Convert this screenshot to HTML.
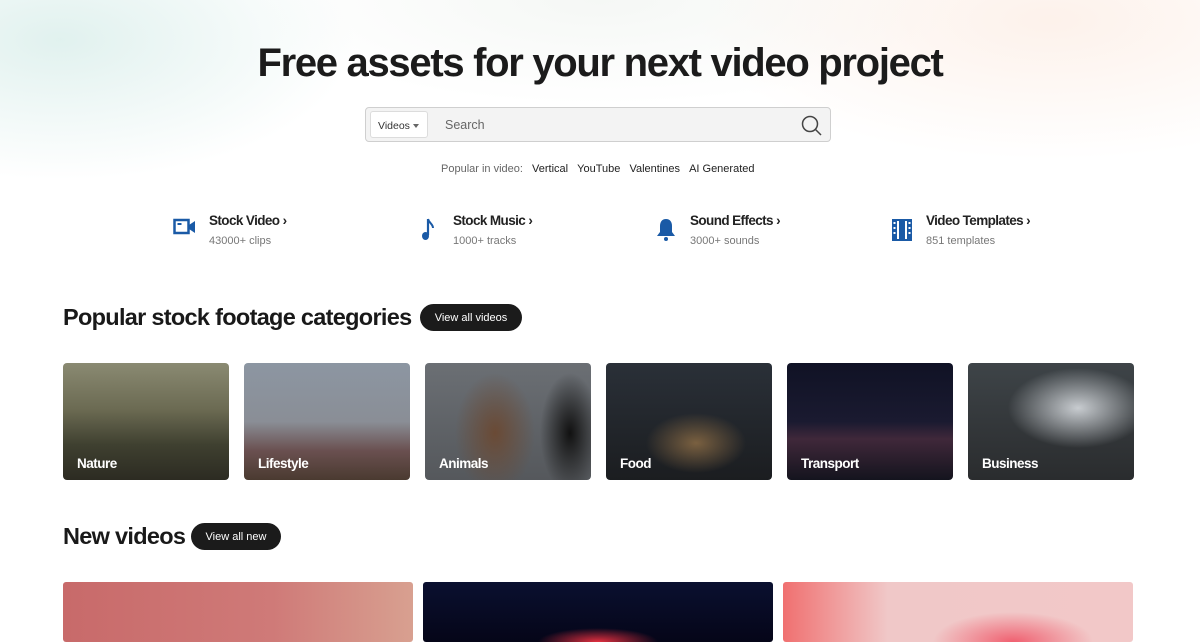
<!DOCTYPE html>
<html><head><meta charset="utf-8"><style>
*{margin:0;padding:0;box-sizing:border-box}
body{width:1200px;height:628px;overflow:hidden;font-family:"Liberation Sans",sans-serif;color:#191919;position:relative;background:#fff}
.bg{position:absolute;inset:0;height:260px;background:radial-gradient(ellipse 420px 200px at 60px 40px,rgba(200,230,225,.55),transparent 70%),radial-gradient(ellipse 500px 200px at 1050px 20px,rgba(250,225,210,.45),transparent 70%),radial-gradient(ellipse 500px 150px at 600px 0,rgba(235,240,235,.5),transparent 70%)}
h1{position:absolute;top:41px;left:0;width:1200px;text-align:center;font-size:40px;font-weight:700;letter-spacing:-1.3px;color:#1b1b1b}
.search{position:absolute;left:365px;top:107px;width:466px;height:35px;background:#f3f3f3;border:1px solid #cfcfcf;border-radius:4px}
.sel{position:absolute;left:4px;top:3px;width:58px;height:27px;background:#fff;border:1px solid #dcdcdc;border-radius:3px;font-size:10.5px;color:#333;padding:8px 0 0 7px}
.sel:after{content:"";position:absolute;right:8px;top:12px;border:3px solid transparent;border-top:4px solid #666}
.ph{position:absolute;left:79px;top:10px;font-size:12.5px;color:#666}
.pop{position:absolute;top:163px;left:441px;font-size:11px;color:#666}
.pop b{font-weight:400;color:#222;margin-left:6px}
.cat{position:absolute;top:213px}
.cat .t{position:absolute;left:36px;top:0;font-size:13.5px;font-weight:700;white-space:nowrap;letter-spacing:-.6px;color:#222}
.cat .s{position:absolute;left:36px;top:22px;font-size:11px;color:#777;white-space:nowrap}
.cat svg{position:absolute;left:0;top:4px}
h2{position:absolute;font-size:23.5px;font-weight:700;letter-spacing:-.7px}
.btn{position:absolute;background:#1b1b1b;color:#fff;font-size:11px;border-radius:14px;height:27px;display:flex;align-items:center;justify-content:center;padding-top:1px}
.card{position:absolute;top:363px;width:166px;height:117px;border-radius:4px;overflow:hidden}
.card span{position:absolute;left:14px;bottom:9px;color:#fff;font-weight:700;font-size:13.5px;letter-spacing:-.5px}
.nv{position:absolute;top:582px;width:350px;height:60px;border-radius:3px}
</style></head><body>
<div class="bg"></div>
<h1>Free assets for your next video project</h1>
<div class="search"><div class="sel">Videos</div><div class="ph">Search</div>
<svg style="position:absolute;left:435px;top:7px" width="22" height="22" viewBox="0 0 22 22"><circle cx="9" cy="9" r="7.5" fill="none" stroke="#444" stroke-width="1.5"/><line x1="14.5" y1="14.5" x2="20" y2="20" stroke="#444" stroke-width="1.5"/></svg></div>
<div class="pop">Popular in video: <b>Vertical</b> <b>YouTube</b> <b>Valentines</b> <b>AI Generated</b></div>

<div class="cat" style="left:173px"><svg width="24" height="20" viewBox="0 0 24 20"><rect x="1.5" y="3" width="14" height="13" fill="none" stroke="#1a5aa6" stroke-width="2.5"/><rect x="4.5" y="6" width="4" height="2" fill="#1a5aa6"/><path d="M16 8l6-4v12l-6-4z" fill="#1a5aa6"/></svg><div class="t">Stock Video ›</div><div class="s">43000+ clips</div></div>
<div class="cat" style="left:417px"><svg width="24" height="26" viewBox="0 0 24 26"><path d="M11 2v16" stroke="#1a5aa6" stroke-width="2.2"/><ellipse cx="8.5" cy="19" rx="3.5" ry="4" fill="#1a5aa6"/><path d="M11 2c1 4 5 5 5 9" stroke="#1a5aa6" stroke-width="2" fill="none"/></svg><div class="t">Stock Music ›</div><div class="s">1000+ tracks</div></div>
<div class="cat" style="left:654px"><svg width="24" height="26" viewBox="0 0 24 26"><path d="M12 2c4 0 6 3 6 7v6l3 4H3l3-4V9c0-4 2-7 6-7z" fill="#1a5aa6"/><circle cx="12" cy="22" r="2" fill="#1a5aa6"/></svg><div class="t">Sound Effects ›</div><div class="s">3000+ sounds</div></div>
<div class="cat" style="left:890px"><svg width="24" height="26" viewBox="0 0 24 26"><rect x="2" y="2" width="20" height="22" fill="#1a5aa6"/><rect x="7" y="4" width="10" height="18" fill="#fff"/><rect x="9" y="4" width="6" height="18" fill="#1a5aa6"/><g fill="#fff"><rect x="3.5" y="5" width="2" height="2"/><rect x="3.5" y="10" width="2" height="2"/><rect x="3.5" y="15" width="2" height="2"/><rect x="18.5" y="5" width="2" height="2"/><rect x="18.5" y="10" width="2" height="2"/><rect x="18.5" y="15" width="2" height="2"/></g></svg><div class="t">Video Templates ›</div><div class="s">851 templates</div></div>

<h2 style="left:63px;top:304px">Popular stock footage categories</h2>
<div class="btn" style="left:420px;top:304px;width:102px">View all videos</div>

<div class="card" style="left:63px;background:linear-gradient(180deg,#8a8a72 0%,#6b6a52 40%,#3f4030 70%,#2c2b22 100%)"><span>Nature</span></div>
<div class="card" style="left:244px;background:linear-gradient(180deg,#8c96a2 0%,#8a8e96 50%,#6a5050 75%,#4a3a30 100%)"><span>Lifestyle</span></div>
<div class="card" style="left:425px;background:radial-gradient(ellipse 40px 60px at 70px 70px,#6a4a35,transparent),radial-gradient(ellipse 30px 60px at 145px 70px,#111,transparent),linear-gradient(#6b6f74,#55585c)"><span>Animals</span></div>
<div class="card" style="left:606px;background:radial-gradient(ellipse 50px 30px at 90px 80px,#7a6040,transparent),linear-gradient(#2a3038,#1b1d20)"><span>Food</span></div>
<div class="card" style="left:787px;background:linear-gradient(180deg,#101225 0%,#1a1a30 50%,#40283a 65%,#14141e 100%)"><span>Transport</span></div>
<div class="card" style="left:968px;background:radial-gradient(ellipse 70px 40px at 110px 45px,#c8ccd0,transparent),linear-gradient(#3e4448,#2a2c2e)"><span>Business</span></div>

<h2 style="left:63px;top:523px">New videos</h2>
<div class="btn" style="left:191px;top:523px;width:90px">View all new</div>

<div class="nv" style="left:63px;background:linear-gradient(90deg,#c86a6a,#cf7a78 60%,#d8a090)"></div>
<div class="nv" style="left:423px;background:radial-gradient(ellipse 60px 14px at 175px 60px,#e33040,transparent),linear-gradient(#0a1030,#050518)"></div>
<div class="nv" style="left:783px;background:radial-gradient(ellipse 80px 30px at 230px 60px,#f06070,transparent),linear-gradient(90deg,#f07070,#f0c8c8 30%,#f2c8c8)"></div>
</body></html>
